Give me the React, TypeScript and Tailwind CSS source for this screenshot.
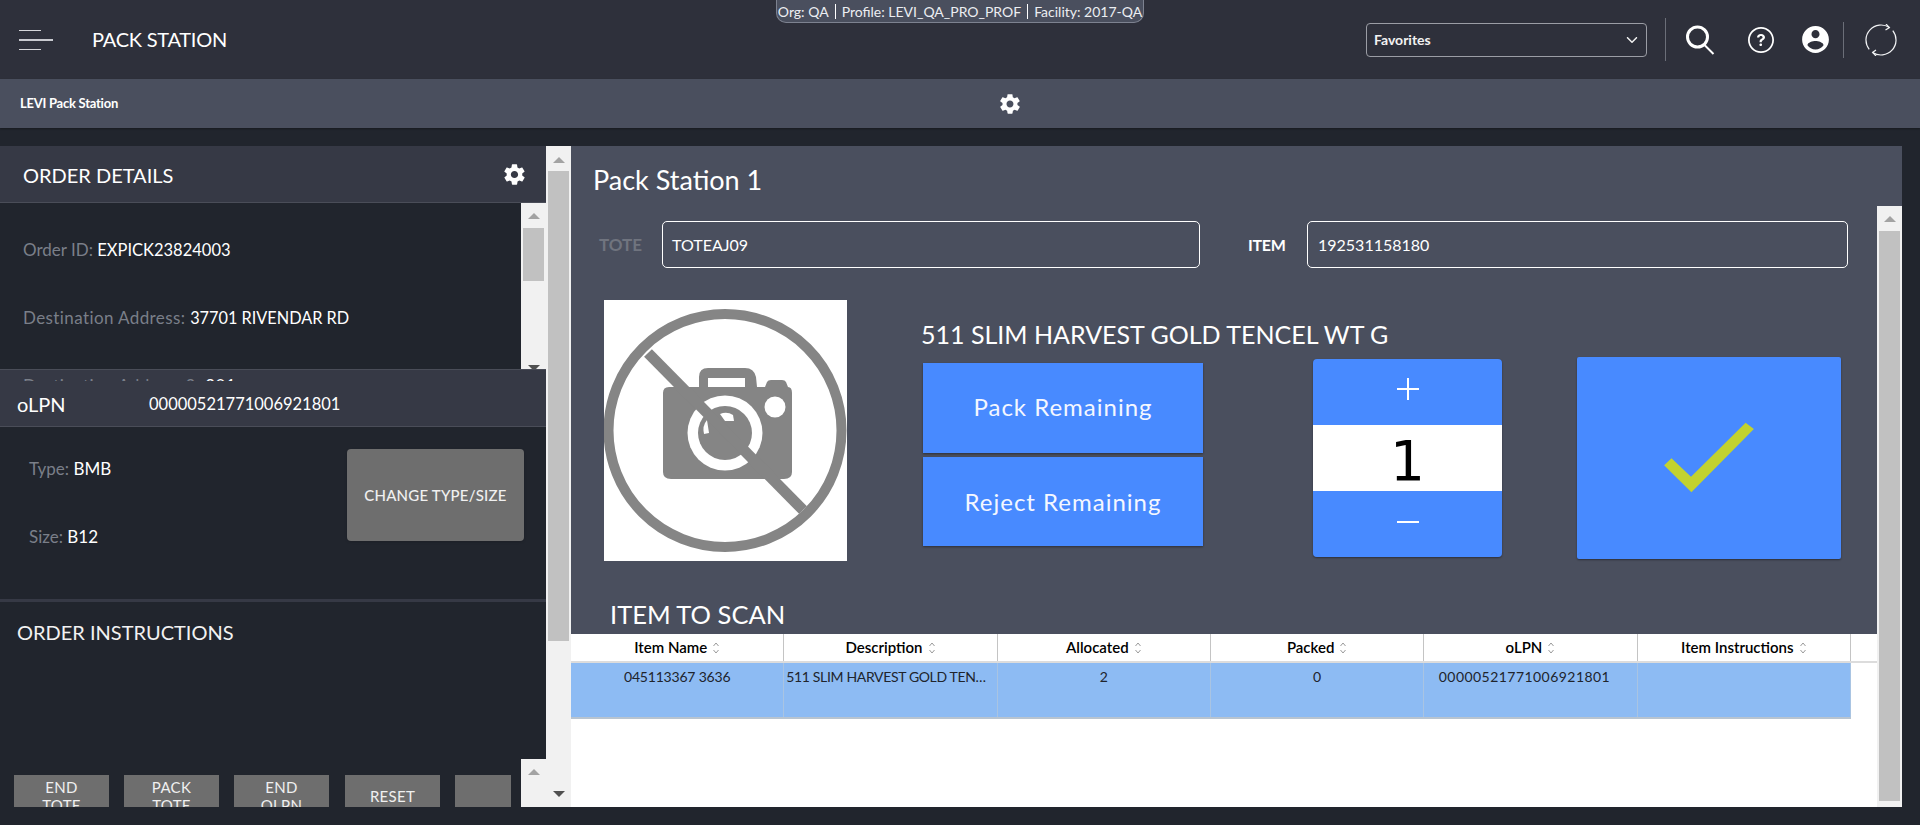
import { IoMdSettings, IoIosArrowDown, IoIosHelpCircleOutline, IoMdContact } from "react-icons/io";

const columns = ["Item Name", "Description", "Allocated", "Packed", "oLPN", "Item Instructions"];
const row = [
  { text: "045113367 3636", cls: "tracking-[-0.2px]" },
  { text: "511 SLIM HARVEST GOLD TENCEL WT G", cls: "tracking-[-0.35px]" },
  { text: "2", cls: "" },
  { text: "0", cls: "" },
  { text: "00000521771006921801", cls: "pr-[14px] tracking-[0.45px]" },
  { text: "", cls: "" },
];

function SortIcon() {
  return (
    <svg viewBox="0 0 8 14" className="ml-[5px] h-[14px] w-[8px] shrink-0" fill="none" stroke="#9a9a9a" strokeWidth="1">
      <path d="M1.5 5 4 2l2.5 3M1.5 9 4 12l2.5-3" />
    </svg>
  );
}

function Arrow({ down, dark }: { down?: boolean; dark?: boolean }) {
  return (
    <svg viewBox="0 0 12 6" className="h-[6px] w-[12px]" fill={dark ? "#505050" : "#a3a3a3"}>
      <path d={down ? "M0 0h12L6 6z" : "M0 6h12L6 0z"} />
    </svg>
  );
}

function NoImage() {
  return (
    <svg viewBox="0 0 243 261" className="h-[261px] w-[243px] shrink-0 bg-white">
      <circle cx="121" cy="130.5" r="116.5" fill="none" stroke="#858585" strokeWidth="10" />
      <path
        fill="#858585"
        d="M65 87H95V77q0-9 9-9h37q9 0 11 9l1 10h8l2-5q1-2 4-2h11q3 0 4 2l2 5q4 0 4 6v79q0 7-8 7H67q-8 0-8-7V93q0-6 6-6z"
      />
      <rect x="104" y="78" width="37" height="9" fill="#fff" />
      <circle cx="171" cy="107" r="10.5" fill="#fff" />
      <circle cx="121" cy="133" r="37.5" fill="#fff" />
      <circle cx="121" cy="133" r="27" fill="#858585" />
      <path d="M100 134q-2-8 3-14l2 13z" fill="#fff" />
      <path d="M116 114q7-3 13 1l1 6h-9z" fill="#fff" />
      <path d="M44 53 199 210" stroke="#858585" strokeWidth="11" />
    </svg>
  );
}

function SearchIcon() {
  return (
    <svg viewBox="0 0 30 30" className="ml-[19px] h-[30px] w-[30px]" fill="none" stroke="#fff">
      <circle cx="12.5" cy="12" r="10" strokeWidth="3" />
      <path d="M19 19.5 28.5 29" strokeWidth="2" />
    </svg>
  );
}

function SyncIcon() {
  return (
    <svg viewBox="0 0 32 32" className="ml-[21px] h-[32px] w-[32px]" fill="none" stroke="#f2f3f5" strokeWidth="1.2">
      <path d="M24.4 3.6A15 15 0 0 0 4.2 25.3" />
      <path d="M7.6 28.4A15 15 0 0 0 27.8 6.7" />
      <path d="M21 0l3.4 3.6L20.5 6" />
      <path d="M11 26l-3.4 2.4L11 32" />
    </svg>
  );
}

export default function App() {
  return (
    <div className="relative flex h-[825px] w-[1920px] flex-col overflow-hidden bg-[#21252d] font-['Lato',sans-serif] text-white">
      <div className="absolute left-[776px] top-0 z-20 flex h-[23px] w-[368px] items-center justify-center rounded-b-[10px] border border-t-0 border-[#7d8290] bg-[#4a4f5e] text-[14px] text-[#eceef2]">
        <span>Org: QA</span>
        <span className="mx-[6px] h-[15px] w-px bg-white" />
        <span>Profile: LEVI_QA_PRO_PROF</span>
        <span className="mx-[6px] h-[15px] w-px bg-white" />
        <span>Facility: 2017-QA</span>
      </div>

      <header className="flex h-[79px] shrink-0 items-center bg-[#2e303b]">
        <div className="ml-[19px] flex w-[34px] flex-col gap-[8px]">
          <span className="h-px w-[22px] bg-[#d5d6da]" />
          <span className="h-[2px] w-[34px] bg-[#c9cad0]" />
          <span className="h-px w-[22px] bg-[#d5d6da]" />
        </div>
        <h1 className="ml-[39px] w-[135px] whitespace-nowrap pb-[1px] text-[20px] font-normal tracking-[-0.25px]">PACK STATION</h1>
        <div className="ml-[1139px] flex h-[34px] w-[281px] items-center justify-between rounded-[4px] border border-[#9b9da5] pl-[7px] pr-[6px] text-[14px] font-bold text-[#f2f2f2]">
          Favorites
          <IoIosArrowDown size={16} />
        </div>
        <span className="ml-[18px] h-[43px] w-px bg-[#6b6e78]" />
        <SearchIcon />
        <IoIosHelpCircleOutline size={32} className="ml-[30px]" />
        <IoMdContact size={33} className="ml-[22px]" />
        <span className="ml-[11px] h-[36px] w-px bg-[#6b6e78]" />
        <SyncIcon />
      </header>

      <div className="relative flex h-[49px] shrink-0 items-center bg-[#4a4f5e] pl-[20px] shadow-[0_1px_2px_rgba(0,0,0,0.3)]">
        <span className="w-[98px] whitespace-nowrap text-[13px] font-bold tracking-[-0.25px]">LEVI Pack Station</span>
        <IoMdSettings size={24} className="ml-[880px]" />
      </div>

      <main className="mt-[18px] flex h-[661px] w-[1902px] shrink-0">
        <section className="flex w-[546px] shrink-0 flex-col overflow-hidden bg-[#21252d]">
          <div className="flex h-[57px] shrink-0 items-center justify-between border-b border-[#4a4d58] bg-[#363945] pl-[23px] pr-[19px]">
            <h2 className="pt-[1px] text-[20px] font-normal">ORDER DETAILS</h2>
            <IoMdSettings size={25} />
          </div>

          <div className="relative z-10 -mb-[12px] flex h-[178px] shrink-0 overflow-hidden">
            <div className="flex-1 pl-[23px] text-[17px] text-[#7a7f89]">
              <p className="mt-[35px] h-[24px] leading-[24px]">
                Order ID: <span className="text-[16.5px] text-white">EXPICK23824003</span>
              </p>
              <p className="mt-[44px] h-[24px] leading-[24px] tracking-[0.4px]">
                Destination Address: <span className="text-[16.3px] tracking-normal text-white">37701 RIVENDAR RD</span>
              </p>
              <p className="mt-[44px] h-[24px] leading-[24px] tracking-[0.4px]">
                Destination Address 2: <span className="text-white">201</span>
              </p>
            </div>
            <div className="flex h-[166px] w-[25px] shrink-0 flex-col items-center bg-[#f1f1f1]">
              <div className="mt-[10px]">
                <Arrow />
              </div>
              <div className="mt-[9px] h-[53px] w-[21px] bg-[#c1c1c1]" />
              <div className="mt-auto h-[4px] overflow-hidden">
                <Arrow down dark />
              </div>
            </div>
          </div>

          <div className="flex h-[58px] shrink-0 items-center border-y border-[#4a4d58] bg-[#363945] pl-[17px] pt-[12px]">
            <span className="w-[132px] text-[20px]">oLPN</span>
            <span className="text-[16.5px]">00000521771006921801</span>
          </div>

          <div className="flex h-[172px] shrink-0 justify-between pl-[29px] pr-[22px] pt-[22px]">
            <div className="text-[17px] text-[#7a7f89]">
              <p className="mt-[8px] h-[24px] leading-[24px]">
                Type: <span className="text-white">BMB</span>
              </p>
              <p className="mt-[44px] h-[24px] leading-[24px]">
                Size: <span className="text-white">B12</span>
              </p>
            </div>
            <button type="button" className="h-[92px] w-[177px] rounded-[4px] bg-[#6e6e6e] text-[15px] font-medium tracking-[0.2px] text-[#f0f0f0] shadow-sm">
              CHANGE TYPE/SIZE
            </button>
          </div>

          <div className="h-[3px] shrink-0 bg-[#363945]" />

          <div className="h-[157px] shrink-0 pl-[17px] pt-[17px]">
            <h2 className="text-[20px] font-normal leading-[26px] text-[#f2f2f2]">ORDER INSTRUCTIONS</h2>
          </div>

          <div className="flex h-[48px] shrink-0">
            <div className="flex w-[521px] items-start overflow-hidden pl-[14px] pt-[16px] text-center text-[15px] leading-[18px] tracking-[0.3px] text-[#f0f0f0]">
              <div className="h-[60px] w-[95px] shrink-0 bg-[#6e6e6e] pt-[3px]">END<br />TOTE</div>
              <div className="ml-[15px] h-[60px] w-[95px] shrink-0 bg-[#6e6e6e] pt-[3px]">PACK<br />TOTE</div>
              <div className="ml-[15px] h-[60px] w-[95px] shrink-0 bg-[#6e6e6e] pt-[3px]">END<br />OLPN</div>
              <div className="ml-[16px] h-[60px] w-[95px] shrink-0 bg-[#6e6e6e] pt-[12px]">RESET</div>
              <div className="ml-[15px] h-[60px] w-[56px] shrink-0 bg-[#6e6e6e]" />
            </div>
            <div className="flex w-[25px] shrink-0 flex-col items-center bg-[#f1f1f1] pt-[10px]">
              <Arrow />
            </div>
          </div>
        </section>

        <div className="flex w-[25px] shrink-0 flex-col items-center bg-[#f1f1f1]">
          <div className="mt-[11px]">
            <Arrow />
          </div>
          <div className="mt-[8px] h-[470px] w-[21px] bg-[#c1c1c1]" />
          <div className="mt-[150px]">
            <Arrow down dark />
          </div>
        </div>

        <section className="flex w-[1331px] shrink-0 flex-col bg-[#4a4f5e]">
          <div className="flex h-[60px] shrink-0 items-center pl-[22px] pt-[8px]">
            <h2 className="text-[27px] font-normal">Pack Station 1</h2>
          </div>

          <div className="flex min-h-0 flex-1">
            <div className="flex w-[1306px] shrink-0 flex-col">
              <div className="ml-[28px] mt-[15px] flex h-[47px] items-center text-[17px] font-bold">
                <span className="w-[63px] text-[#70747f]">TOTE</span>
                <div className="flex h-[47px] w-[538px] items-center rounded-[5px] border border-white pl-[9px] text-[16px] font-normal">TOTEAJ09</div>
                <span className="ml-[48px] w-[59px] text-[16px] tracking-[-0.3px]">ITEM</span>
                <div className="flex h-[47px] w-[541px] items-center rounded-[5px] border border-white pl-[10px] text-[16px] font-normal">192531158180</div>
              </div>

              <div className="ml-[33px] mt-[32px] flex h-[261px] items-start">
                <NoImage />
                <div className="ml-[74px] w-[392px] shrink-0">
                  <p className="mt-[17px] h-[34px] whitespace-nowrap text-[25px] leading-[34px]">511 SLIM HARVEST GOLD TENCEL WT G</p>
                  <button type="button" className="ml-[2px] mt-[12px] block h-[90px] w-[280px] bg-[#488aff] pb-[2px] text-[24px] tracking-[1px] text-[#f4f7ff] shadow-[0_1px_2px_rgba(0,0,0,0.4)]">
                    Pack Remaining
                  </button>
                  <button type="button" className="ml-[2px] mt-[4px] block h-[89px] w-[280px] bg-[#488aff] text-[24px] tracking-[1px] text-[#f4f7ff] shadow-[0_1px_2px_rgba(0,0,0,0.4)]">
                    Reject Remaining
                  </button>
                </div>
                <div className="mt-[59px] flex w-[189px] shrink-0 flex-col overflow-hidden rounded-[4px] shadow-[0_1px_2px_rgba(0,0,0,0.4)]">
                  <div className="flex h-[66px] items-center justify-center bg-[#488aff] pb-[6px] shadow-[0_1px_2px_rgba(0,0,0,0.4)]">
                    <svg viewBox="0 0 22 22" className="h-[22px] w-[22px]" stroke="#fff" strokeWidth="2">
                      <path d="M0 11h22M11 0v22" />
                    </svg>
                  </div>
                  <div className="flex h-[66px] items-center justify-center bg-white pt-[6px] font-['DejaVu_Sans',sans-serif] text-[55px] leading-none text-black">1</div>
                  <div className="flex h-[66px] items-center justify-center bg-[#488aff] pb-[5px]">
                    <svg viewBox="0 0 22 2" className="h-[2px] w-[22px]" stroke="#fff" strokeWidth="2">
                      <path d="M0 1h22" />
                    </svg>
                  </div>
                </div>
                <button type="button" className="ml-[75px] mt-[57px] h-[202px] w-[264px] shrink-0 rounded-[2px] bg-[#488aff] shadow-[0_1px_2px_rgba(0,0,0,0.4)]" aria-label="confirm">
                  <svg viewBox="0 0 264 202" className="h-full w-full">
                    <path d="M168.6 65.7 176.9 72 114.4 135.3 87.1 108.3 94.5 101.3 114 119.7z" fill="#c2d22f" />
                  </svg>
                </button>
              </div>

              <h3 className="ml-[39px] mt-[36px] h-[34px] text-[25.5px] font-normal leading-[34px]">ITEM TO SCAN</h3>

              <div className="mt-[3px] flex-1 bg-white text-black">
                <div className="grid h-[29px] grid-cols-[repeat(6,213.33px)] border-b-2 border-[#dcdcdc]">
                  {columns.map((c) => (
                    <div key={c} className="flex items-center justify-center border-r border-[#c4c4c4] text-[15px] font-semibold">
                      {c}
                      <SortIcon />
                    </div>
                  ))}
                </div>
                <div className="grid h-[56px] w-[1280px] grid-cols-[repeat(6,213.33px)] border-b-2 border-[#b8c4d0] bg-[#8dbbf3]">
                  {row.map((c, i) => (
                    <div key={i} className={`truncate border-r border-[#a9c4e2] px-[2px] pt-[4px] text-center text-[14px] leading-[20px] text-[#20242c] ${c.cls}`}>
                      {c.text}
                    </div>
                  ))}
                </div>
              </div>
            </div>

            <div className="flex w-[25px] shrink-0 flex-col items-center bg-[#f1f1f1]">
              <div className="mt-[10px]">
                <Arrow />
              </div>
              <div className="mt-[9px] h-[570px] w-[21px] bg-[#c1c1c1]" />
            </div>
          </div>
        </section>
      </main>
    </div>
  );
}
